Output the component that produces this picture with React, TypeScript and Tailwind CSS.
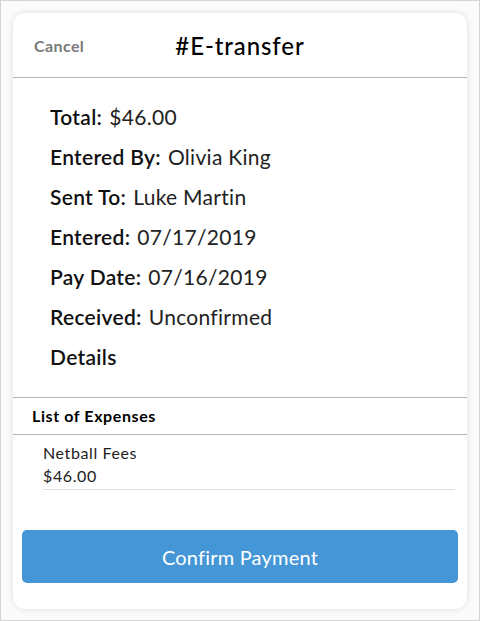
import React from "react";

const rows: { label: string; value?: string }[] = [
  { label: "Total:", value: "$46.00" },
  { label: "Entered By:", value: "Olivia King" },
  { label: "Sent To:", value: "Luke Martin" },
  { label: "Entered:", value: "07/17/2019" },
  { label: "Pay Date:", value: "07/16/2019" },
  { label: "Received:", value: "Unconfirmed" },
  { label: "Details" },
];

export default function App() {
  return (
    <div
      className="h-[621px] w-[480px] border border-[#d4d4d4] bg-[#fbfbfb] p-3 text-black"
      style={{ fontFamily: "Lato, 'Noto Sans', sans-serif" }}
    >
      <div className="flex h-[596px] flex-col rounded-[12px] bg-white shadow-[0_0_6px_rgba(0,0,0,0.12)]">
        {/* header */}
        <div className="relative flex h-[65px] items-center justify-center border-b border-[#b5b5b5]">
          <button className="absolute left-[21px] top-[21px] text-[16px] font-bold tracking-[0.4px] text-[#7a7a7a]">
            Cancel
          </button>
          <h1 className="pt-[1px] text-[24px] font-medium tracking-[0.9px]">#E-transfer</h1>
        </div>

        {/* details */}
        <div className="flex flex-col gap-[17px] px-[37px] pt-[27px] pb-[29px] text-[21px] leading-[23px] tracking-[0.3px]">
          {rows.map((r) => (
            <div key={r.label} className="flex gap-[7px]">
              <span className="font-semibold text-[#111]">{r.label}</span>
              {r.value && <span className="text-[#222]">{r.value}</span>}
            </div>
          ))}
        </div>

        {/* list of expenses */}
        <div className="border-y border-[#b5b5b5] px-[19px] py-[7px] text-[16px] font-bold leading-[22px] tracking-[0.6px]">
          List of Expenses
        </div>
        <div className="pl-[30px] pr-[12px] pt-[6px]">
          <div className="border-b border-[#dedede] pb-[2px] text-[16px] leading-[23px] tracking-[0.6px] text-[#222]">
            <div>Netball Fees</div>
            <div>$46.00</div>
          </div>
        </div>

        <div className="mt-auto px-[9px] pb-[26px]">
          <button className="h-[53px] w-full rounded-[5px] bg-[#4596d6] text-[20px] tracking-[0.2px] text-white">
            Confirm Payment
          </button>
        </div>
      </div>
    </div>
  );
}
